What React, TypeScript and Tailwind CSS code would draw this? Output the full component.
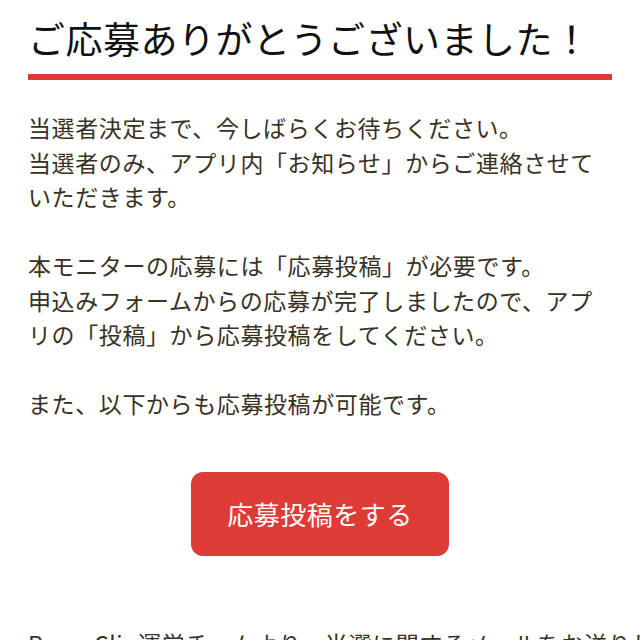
export default function App() {
  const font = { fontFamily: '"Noto Sans CJK JP", "Noto Sans", sans-serif' };
  return (
    <div className="w-[640px] h-[640px] overflow-hidden bg-white" style={font}>
      <div className="px-[28px] pt-[14px]">
        <h1 className="text-[37px] leading-[48px] font-normal text-[#111] tracking-[0.5px] whitespace-nowrap">
          ご応募ありがとうございました！
        </h1>
        <div className="mt-[12px] h-[6px] bg-[#dc3a35]" />
        <div className="mt-[30px] text-[23px] leading-[34.5px] text-[#3a3023] tracking-[0.6px] whitespace-nowrap">
          <p>当選者決定まで、今しばらくお待ちください。</p>
          <p>当選者のみ、アプリ内「お知らせ」からご連絡させて</p>
          <p>いただきます。</p>
          <p className="mt-[34.5px]">本モニターの応募には「応募投稿」が必要です。</p>
          <p>申込みフォームからの応募が完了しましたので、アプ</p>
          <p>リの「投稿」から応募投稿をしてください。</p>
          <p className="mt-[34.5px]">また、以下からも応募投稿が可能です。</p>
        </div>
        <div className="flex justify-center mt-[51px]">
          <button className="w-[258px] h-[84px] rounded-[12px] bg-[#dc3b36] text-white text-[26px] tracking-[0.5px]">
            応募投稿をする
          </button>
        </div>
        <p className="mt-[70px] text-[23px] leading-[34.5px] text-[#3a3023] tracking-[0.6px] whitespace-nowrap">
          RoomClip運営チームより、当選に関するメールをお送りします。
        </p>
      </div>
    </div>
  );
}
